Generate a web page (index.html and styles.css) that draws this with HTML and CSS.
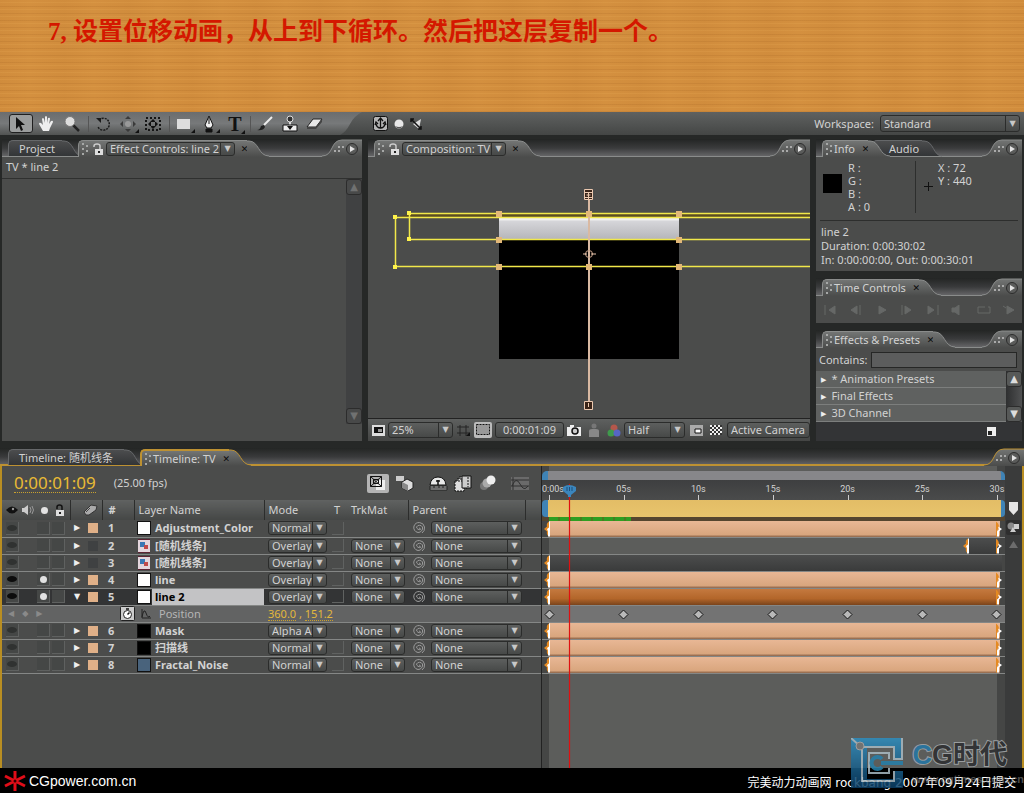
FILE: index.html
```
<!DOCTYPE html>
<html lang="zh">
	<head>
		<meta charset="utf-8">
		<meta name="viewport" content="width=device-width, initial-scale=1">
		<link rel="stylesheet" href="styles.css">
		<title>CGpower.com.cn</title>
	</head>
	<body>
		<!-- shared shapes -->
		<svg class="defs" width="0" height="0">
			<defs>
				<linearGradient id="tabfill" x1="0" y1="0" x2="0" y2="1"><stop offset="0" stop-color="#737574"/><stop offset="1" stop-color="#4b4c4b"/></linearGradient>
				<linearGradient id="toolfill" x1="0" y1="0" x2="0" y2="1"><stop offset="0" stop-color="#6b6d6e"/><stop offset=".5" stop-color="#77797a"/><stop offset="1" stop-color="#515352"/></linearGradient>
				<linearGradient id="offfill" x1="0" y1="0" x2="0" y2="1"><stop offset="0" stop-color="#4c4d4e"/><stop offset="1" stop-color="#333537"/></linearGradient>
				<linearGradient id="frame" x1="0" y1="0" x2="0" y2="1"><stop offset="0" stop-color="#e2e2e6"/><stop offset="1" stop-color="#b4b4b8"/></linearGradient>
				<linearGradient id="blue" x1="0" y1="0" x2="0" y2="1"><stop offset="0" stop-color="#2e8fc0"/><stop offset="1" stop-color="#0c3f66"/></linearGradient>
			</defs>
			<symbol id="slope" viewBox="0 0 22 17"><path d="M0 1H2C12 1 11 16 22 16V17H0Z" fill="url(#tabfill)"/><path class="edge" d="M0 1H2C12 1 11 16 22 16"/></symbol>
			<symbol id="slope-off" viewBox="0 0 22 17"><path d="M0 1H2C12 1 11 16 20 16H0Z" fill="url(#offfill)"/><path d="M0 1H2C12 1 11 16 20 16" fill="none" stroke="#66686a"/></symbol>
			<symbol id="corner" viewBox="0 0 40 18"><path d="M0 17C12 17 8 1 20 1H40V18H0Z" fill="url(#tabfill)"/><path class="edge" d="M0 17C12 17 8 1 20 1H40"/><path d="M12 11h2v2h-2zM16 11h2v2h-2zM16 7h2v2h-2zM20 7h2v2h-2z" fill="#aaa"/><circle cx="30" cy="10" r="5.500" fill="#5a5b5a" stroke="#2d2d2d"/><path d="M28 7l5 3-5 3z" fill="#e4e4e4"/></symbol>
			<symbol id="grip" viewBox="0 0 8 12"><path d="M0 0h2v2H0zM4 2h2v2H4zM0 5h2v2H0zM4 7h2v2H4zM0 10h2v2H0z" fill="#a6a8a7"/></symbol>
			<symbol id="lock" viewBox="0 0 10 12"><path d="M2 5V3q0-2 2.500-2T7 3v3" fill="none" stroke="#111" stroke-width="1.500"/><path d="M1 6h8v6H1z" fill="#ddd"/><path d="M4 8h2v2H4z" fill="#222"/></symbol>
			<symbol id="unlock" viewBox="0 0 10 12"><path d="M1 4V3q0-2 3-2t3 2v3" fill="none" stroke="#ccc" stroke-width="1.500"/><path d="M2 6h8v6H2z" fill="#ddd"/><path d="M5 8h2v2H5z" fill="#222"/></symbol>
			<symbol id="eye" viewBox="0 0 12 8"><path d="M0 4q6-7 12 0q-6 7-12 0z"/><circle cx="7" cy="3" r="1.200" fill="#999"/></symbol>
			<symbol id="spiral" viewBox="0 0 14 14"><path d="M7 7A1.500 1.500 0 0 1 8.500 8.500A3 3 0 0 1 4.500 6A3.500 3.500 0 0 1 10.500 6A4.500 4.500 0 0 1 6 11.500A5 5 0 0 1 2 5A5.500 5.500 0 0 1 12.500 6Q13 10 10 12" fill="none" stroke="#9a9a9a"/></symbol>
			<symbol id="inpt" viewBox="0 0 6 15"><path d="M5 0Q2 2 3 5L0 7.500 3 10Q2 13 5 15z" fill="#e58a22"/><path d="M3 7.500L4 10V15H6V0H5V6z" fill="#fff"/></symbol>
			<symbol id="outpt" viewBox="0 0 6 15"><path d="M0 0Q3 2 3 6L1 9V15H0z" fill="#e58a22"/><path d="M1 15V10L3 8 2 5 6 7.500 3 10V15z" fill="#fff"/></symbol>
			<symbol id="key" viewBox="0 0 11 11"><path d="M5.500 1L10 5.500 5.500 10 1 5.500z" fill="#b9b9b9" stroke="#151515"/></symbol>
			<symbol id="clip" viewBox="0 0 14 14"><path d="M1 0h12v14H1z" fill="#e4d6dd"/><path d="M1 0h12v1H1zM1 13h12v1H1z" fill="#5d2333"/><path d="M3 3h5v5H3z" fill="#3a78b5"/><path d="M7 6h4v4H7z" fill="#c04a4a"/></symbol>
		</svg>

		<header class="banner"><h1>7, 设置位移动画，从上到下循环。然后把这层复制一个。</h1></header>

		<nav class="toolbar">
			<div class="tools">
				<button class="tool on" aria-label="Selection"><svg width="20" height="18" viewBox="0 0 20 18"><path d="M6 2v12l3-3 2 5 2-1-2-5h4z" fill="#111"/></svg></button>
				<button class="tool" aria-label="Hand"><svg width="18" height="18" viewBox="0 0 18 18"><path d="M5 16L1 9q0-2 2-1l2 2L4 4q1-2 2 0l1 4V2q1-2 2 0v6l1-5q2-1 2 1l-1 5 2-3q2-1 2 1l-3 6-1 3z" fill="#eee"/></svg></button>
				<button class="tool" aria-label="Zoom"><svg width="18" height="18" viewBox="0 0 18 18"><path d="M10 10l6 6" stroke="#222" stroke-width="2.500"/><circle cx="7" cy="6.500" r="5" fill="#ddd" stroke="#777"/></svg></button>
				<i class="sep"></i>
				<button class="tool" aria-label="Rotate"><svg width="18" height="18" viewBox="0 0 18 18"><path d="M5 5a6 6 0 1 1-1 7" fill="none" stroke="#1a1a1a" stroke-width="1.500" stroke-dasharray="2 1"/><path d="M2 3h5v5z" fill="#1a1a1a"/></svg></button>
				<button class="tool more" aria-label="Camera"><svg width="18" height="18" viewBox="0 0 18 18"><circle cx="9" cy="9" r="3" fill="#999"/><path d="M9 1l3 3H6zM9 17l3-3H6zM1 9l3-3v6zM17 9l-3-3v6z" fill="#3a3a3a"/></svg></button>
				<button class="tool" aria-label="Pan behind"><svg width="18" height="18" viewBox="0 0 18 18"><path d="M2 3h14v12H2z" fill="none" stroke="#151515" stroke-width="2" stroke-dasharray="2 2"/><path d="M9 4l3 3H6zM9 14l3-3H6zM4 9l3-3v6zM14 9l-3-3v6z" fill="#111"/></svg></button>
				<i class="sep"></i>
				<button class="tool more" aria-label="Rectangle mask"><svg width="18" height="18" viewBox="0 0 18 18"><path d="M2 4h13v10H2z" fill="#ddd"/></svg></button>
				<button class="tool more" aria-label="Pen"><svg width="18" height="18" viewBox="0 0 18 18"><path d="M9 1l4 9-2 3H7l-2-3z" fill="#eee" stroke="#111"/><path d="M9 3v6M6 14h6v3H6z" fill="#111" stroke="#111"/></svg></button>
				<button class="tool more letter" aria-label="Type">T</button>
				<i class="sep"></i>
				<button class="tool" aria-label="Brush"><svg width="18" height="18" viewBox="0 0 18 18"><path d="M8 10L16 2" stroke="#eee" stroke-width="2"/><path d="M1 15q3 0 4-4l3-1 1 2q-2 4-8 3z" fill="#222"/></svg></button>
				<button class="tool" aria-label="Clone stamp"><svg width="18" height="18" viewBox="0 0 18 18"><circle cx="9" cy="4" r="3" fill="#333" stroke="#ddd"/><path d="M8 7h2v3H8z" fill="#ddd"/><path d="M2 10h14v6H2z" fill="#eee" stroke="#111"/><path d="M6 11h6l-3 4z" fill="#111"/></svg></button>
				<button class="tool" aria-label="Eraser"><svg width="18" height="18" viewBox="0 0 18 18"><path d="M7 4h9l-6 8H1z" fill="#e8e8e8" stroke="#222"/><path d="M1 12h9v2H1zM10 12l6-8v3l-6 7z" fill="#444"/></svg></button>
			</div>
			<svg class="cut" width="22" height="23" viewBox="0 0 22 23"><path d="M0 0H22Q14 4 10 12T0 23Z"/></svg>
			<div class="axes">
				<svg width="15" height="15" viewBox="0 0 15 15"><rect x=".5" y=".5" width="14" height="14" rx="2" fill="#b5b5b5" stroke="#111"/><path d="M7.500 3v9M3 8q1 4 4.500 4T12 8M5 5l2.500-3L10 5M2 9l1-3 2 2M13 9l-1-3-2 2" fill="none" stroke="#111" stroke-width="1.300"/></svg>
				<svg width="10" height="10" viewBox="0 0 10 10"><circle cx="5" cy="5" r="4.500" fill="#e8e8e8"/><path d="M1 7a4.500 4.500 0 0 0 8 0q-4 2-8 0z" fill="#555"/></svg>
				<svg width="12" height="12" viewBox="0 0 12 12"><path d="M11 1L3 6l6 5z" fill="#ddd"/><path d="M1 1l10 10M1 4V1h3M8 11h3V8" fill="none" stroke="#111" stroke-width="1.500"/></svg>
			</div>
			<label for="workspace">Workspace:</label>
			<span class="dd ws"><select id="workspace"><option>Standard</option></select></span>
		</nav>

		<main class="panels">
			<section class="panel">
				<div class="strip">
					<button class="tab off project">Project</button><svg class="slope" width="22" height="17"><use href="#slope-off"/></svg>
					<div class="tab push"><svg width="8" height="12"><use href="#grip"/></svg><svg width="10" height="12"><use href="#unlock"/></svg><span class="dd fx"><select aria-label="Effect Controls"><option>Effect Controls: line 2</option></select></span><button class="close" aria-label="Close">✕</button></div><svg class="slope" width="22" height="17"><use href="#slope"/></svg>
					<svg class="corner" width="40" height="18"><use href="#corner"/></svg>
				</div>
				<p class="crumb">TV * line 2</p>
				<div class="scrollarea"><div class="bar dim"><button aria-label="Up">▲</button><button aria-label="Down">▼</button></div></div>
			</section>

			<section class="panel">
				<div class="strip">
					<div class="tab"><svg width="8" height="12"><use href="#grip"/></svg><svg width="10" height="12"><use href="#unlock"/></svg><span class="dd comp"><select aria-label="Composition"><option>Composition: TV</option></select></span><button class="close" aria-label="Close">✕</button></div><svg class="slope" width="22" height="17"><use href="#slope"/></svg>
					<svg class="corner" width="40" height="18"><use href="#corner"/></svg>
				</div>
				<svg class="viewer" viewBox="368 157 442 261" preserveAspectRatio="xMidYMid slice">
					<path d="M499 214h180v145H499z"/>
					<path d="M499 214h180v26H499z" fill="url(#frame)"/>
					<path d="M409 214h420v4H395z" fill="#5a4c22"/>
					<path d="M499 219h180" stroke="#eee" stroke-width="3"/>
					<g fill="none" stroke="#f1e84a">
						<path d="M830 213.500H409.500V239.500H830" stroke-width="1.500"/>
						<path d="M830 217.500H395.500V266.500H830" stroke-width="1.500"/>
					</g>
					<path d="M407 211h4v4h-4zM407 237h4v4h-4zM393 215h4v4h-4zM393 265h4v4h-4z" fill="#fff34a"/>
					<path d="M589 196v210" stroke="#d9b9a2" stroke-width="2"/>
					<path d="M496 211h6v6h-6zM496 237h6v6h-6zM496 264h6v6h-6zM586 211h6v6h-6zM586 264h6v6h-6zM676 211h6v6h-6zM676 237h6v6h-6zM676 264h6v6h-6z" fill="#e3b878"/>
					<path d="M584.500 189.500h8v10h-8zM584.500 192.500h8M584.500 197.500h8M586.500 195h4M584.500 401.500h8v8h-8z" fill="#3a2418" stroke="#ecc9b0"/>
					<circle cx="589" cy="254" r="3.500" fill="none" stroke="#c9a48c"/><path d="M583 254h4M591 254h5M588.500 403v4M588.500 192v7" stroke="#ecc9b0"/>
				</svg>
				<div class="compbar">
					<svg width="13" height="11" viewBox="0 0 13 11"><path d="M0 0h13v11H0z" fill="#ddd"/><path d="M2 2h9v6H2z" fill="#111"/><path d="M6 4h4v3H6z" fill="#999"/></svg>
					<span class="dd zoom"><select aria-label="Magnification"><option>25%</option></select></span>
					<svg width="15" height="13" viewBox="0 0 15 13"><path d="M1 3h12M1 9h12M4 1v11M10 1v11" stroke="#252525" fill="none"/><path d="M10 12h4V8z" fill="#111"/></svg>
					<svg width="18" height="16" viewBox="0 0 18 16"><rect width="18" height="16" rx="2" fill="#bbb"/><path d="M2.500 2.500h13v10h-13z" fill="#999" stroke="#111" stroke-dasharray="2 1"/></svg>
					<button class="now">0:00:01:09</button>
					<svg width="14" height="11" viewBox="0 0 14 11"><path d="M0 2h3V0h4v2h7v9H0z" fill="#eee"/><circle cx="8" cy="6" r="3" fill="#ccc" stroke="#111" stroke-width="1.500"/></svg>
					<svg class="man" width="12" height="14" viewBox="0 0 12 14"><circle cx="6" cy="3" r="2.500" fill="#777"/><path d="M1 14V8q0-2 3-2h4q3 0 3 2v6z" fill="#888"/></svg>
					<svg width="14" height="13" viewBox="0 0 14 13"><circle cx="7" cy="4" r="3.500" fill="#b4574b"/><circle cx="4" cy="9" r="3.500" fill="#3f9a4c"/><circle cx="10" cy="9" r="3.500" fill="#5666c4"/></svg>
					<span class="dd res"><select aria-label="Resolution"><option>Half</option></select></span>
					<svg class="view" width="13" height="11" viewBox="0 0 13 11"><path d="M0 0h13v11H0z" fill="#aaa"/><path d="M5 4h6v4H5z" fill="#fff" stroke="#111"/></svg>
					<svg class="view" width="12" height="10" viewBox="0 0 12 10"><path d="M0 0h12v10H0z" fill="#eee"/><path d="M2 0h2v2H2zM6 0h2v2H6zM10 0h2v2h-2zM0 2h2v2H0zM4 2h2v2H4zM8 2h2v2H8zM2 4h2v2H2zM6 4h2v2H6zM10 4h2v2h-2zM0 6h2v2H0zM4 6h2v2H4zM8 6h2v2H8zM2 8h2v2H2zM6 8h2v2H6zM10 8h2v2h-2z" fill="#333"/></svg>
					<button class="cam">Active Camera</button>
				</div>
			</section>

			<div class="side">
				<section class="panel">
					<div class="strip">
						<div class="tab slim"><svg width="8" height="12"><use href="#grip"/></svg>Info<button class="close" aria-label="Close">✕</button></div><svg class="slope front" width="22" height="17"><use href="#slope"/></svg>
						<button class="tab off audio">Audio</button><svg class="slope" width="22" height="17"><use href="#slope-off"/></svg>
						<svg class="corner" width="40" height="18"><use href="#corner"/></svg>
					</div>
					<div class="info">
						<div class="readout">
							<i class="swatch"></i>
							<div class="rgb"><p>R :</p><p>G :</p><p>B :</p><p>A : 0</p></div>
							<svg width="9" height="9" viewBox="0 0 9 9"><path d="M4.500 0v9M0 4.500h9" stroke="#111"/></svg>
							<div class="xy"><p>X : 72</p><p>Y : 440</p></div>
						</div>
						<div class="clipinfo"><p>line 2</p><p>Duration: 0:00:30:02</p><p>In: 0:00:00:00, Out: 0:00:30:01</p></div>
					</div>
				</section>
				<section class="panel">
					<div class="strip">
						<div class="tab slim"><svg width="8" height="12"><use href="#grip"/></svg>Time Controls<button class="close" aria-label="Close">✕</button></div><svg class="slope" width="22" height="17"><use href="#slope"/></svg>
						<svg class="corner" width="40" height="18"><use href="#corner"/></svg>
					</div>
					<div class="transport">
						<svg viewBox="0 0 14 10"><path d="M1 0v10"/><path class="fill" d="M11 1L5 5l6 4z"/></svg>
						<svg viewBox="0 0 14 10"><path class="fill" d="M8 1L2 5l6 4z"/><path d="M11 0v10"/></svg>
						<svg viewBox="0 0 14 10"><path class="fill" d="M4 1l7 4-7 4z"/></svg>
						<svg viewBox="0 0 14 10"><path d="M2 0v10"/><path class="fill" d="M5 1l6 4-6 4z"/></svg>
						<svg viewBox="0 0 14 10"><path class="fill" d="M2 1l6 4-6 4z"/><path d="M12 0v10"/></svg>
						<svg viewBox="0 0 14 10"><path class="fill" d="M1 3h3l4-3v10L4 7H1z"/></svg>
						<svg viewBox="0 0 14 10"><path d="M1 2h7M11 2h2v6H1V2"/></svg>
						<svg viewBox="0 0 14 10"><path class="fill" d="M5 1l7 4-7 4z"/><path d="M1 1l3 2"/></svg>
					</div>
				</section>
				<section class="panel effects">
					<div class="strip">
						<div class="tab slim"><svg width="8" height="12"><use href="#grip"/></svg>Effects &amp; Presets<button class="close" aria-label="Close">✕</button></div><svg class="slope" width="22" height="17"><use href="#slope"/></svg>
						<svg class="corner" width="40" height="18"><use href="#corner"/></svg>
					</div>
					<div class="find"><label for="contains">Contains:</label><input id="contains" type="text"></div>
					<div class="presets">
						<ul><li>* Animation Presets</li><li>Final Effects</li><li>3D Channel</li></ul>
						<div class="bar"><button aria-label="Up">▲</button><button aria-label="Down">▼</button></div>
					</div>
					<div class="presetfoot"><svg width="9" height="9" viewBox="0 0 9 9"><path d="M0 0h9v9H0z" fill="#eee"/><path d="M1 4h4v4H1z" fill="#222"/></svg></div>
				</section>
			</div>
		</main>

		<section class="timeline">
			<div class="strip">
				<button class="tab off comp2">Timeline: 随机线条</button><svg class="slope" width="22" height="17"><use href="#slope-off"/></svg>
				<div class="tab slim push"><svg width="8" height="12"><use href="#grip"/></svg>Timeline: TV<button class="close" aria-label="Close">✕</button></div><svg class="slope" width="22" height="17"><use href="#slope"/></svg>
				<svg class="corner" width="40" height="18"><use href="#corner"/></svg>
			</div>
			<div class="tlbody">
				<div class="layers">
					<div class="clock">
						<button class="time">0:00:01:09</button><span>(25.00 fps)</span>
						<div class="switches">
							<svg width="22" height="19" viewBox="0 0 22 19"><rect width="22" height="19" rx="2" fill="#b4b4b4"/><path d="M9 6h9v10H9z" fill="#eee"/><path d="M3.500 2.500h11v10h-11zM3.500 2.500l11 10M14.500 2.500l-11 10M6.500 5.500h5v4h-5z" fill="none" stroke="#111"/></svg>
							<svg width="20" height="16" viewBox="0 0 20 16"><path d="M1 1h8v5H1z" fill="#ccc"/><path d="M7 7l5-3 6 3v6l-5 3-6-3z" fill="#ddd" stroke="#222"/><path d="M7 7l6 3v6l-6-3z" fill="#888"/></svg>
							<svg class="gap" width="19" height="16" viewBox="0 0 19 16"><path d="M1 10q1-8 8-8t8 8z" fill="#e8e8e8" stroke="#111"/><path d="M9 5v5M7 6h4" stroke="#111" stroke-width="1.500"/><path d="M1 11h17v4H1z" fill="#bbb" stroke="#222"/><path d="M5 11v2M10 11v2M14 11v2M1 13h17" stroke="#222"/></svg>
							<svg width="19" height="17" viewBox="0 0 19 17"><path d="M1 6h9v10H1zM3 4h9v10M5 2h9v10" fill="#ddd" stroke="#111" stroke-dasharray="2 1"/><path d="M8 1h9v12H8z" fill="#ccc" stroke="#111"/><path d="M14 2v10" stroke="#111" stroke-dasharray="2 1"/></svg>
							<svg width="18" height="16" viewBox="0 0 18 16"><circle cx="5" cy="11" r="4" fill="#777"/><circle cx="8" cy="8" r="4.500" fill="#aaa"/><circle cx="12" cy="5" r="4.500" fill="#eee"/></svg>
							<svg class="gap" width="18" height="13" viewBox="0 0 18 13"><path d="M0 0h18v13H0z" fill="#6a6a6a"/><path d="M0 3h18M0 9h18M2 0v13M1 9q4-10 8-2t8 2" fill="none" stroke="#303030"/></svg>
						</div>
					</div>
					<table>
						<colgroup><col class="c-av"><col class="c-label"><col class="c-num"><col class="c-name"><col class="c-mode"><col class="c-t"><col class="c-trk"><col class="c-parent"><col></colgroup>
						<thead><tr>
							<th class="rule"><div class="heads"><svg width="12" height="8" fill="#111"><use href="#eye"/></svg><svg width="12" height="10" viewBox="0 0 12 10"><path d="M0 3h2l4-3v10L2 7H0z" fill="#ccc"/><path d="M8 2q2 3 0 6M10 1q3 4 0 8" fill="none" stroke="#999"/></svg><i class="dot"></i><svg width="10" height="12"><use href="#lock"/></svg></div></th>
							<th class="rule"><svg class="tag" width="15" height="12" viewBox="0 0 15 12"><path d="M1 8l7-7 6 1-1 4-7 5H3z" fill="#aaa" stroke="#333"/><path d="M3 8l4-4" stroke="#444"/></svg></th>
							<th class="rule num">#</th><th class="rule">Layer Name</th><th>Mode</th><th>T</th><th class="rule">TrkMat</th><th class="rule">Parent</th><th></th>
						</tr></thead>
						<tbody>
							<tr><td><div class="av"><i class="eye"></i><i></i><i></i></div></td><td><div class="lab"><b>▶</b><i></i></div></td><td class="num">1</td><td><div class="name"><i class="white"></i>Adjustment_Color</div></td><td><span class="dd"><select aria-label="Mode 1"><option>Normal</option></select></span></td><td><i class="tbox"></i></td><td></td><td><div class="par"><svg width="14" height="14"><use href="#spiral"/></svg><span class="dd"><select aria-label="Parent 1"><option>None</option></select></span></div></td><td></td></tr>
							<tr><td><div class="av"><i class="eye"></i><i></i><i></i></div></td><td><div class="lab"><b>▶</b><i class="dark"></i></div></td><td class="num">2</td><td><div class="name"><svg width="14" height="14"><use href="#clip"/></svg>[随机线条]</div></td><td><span class="dd"><select aria-label="Mode 2"><option>Overlay</option></select></span></td><td><i class="tbox"></i></td><td><span class="dd"><select aria-label="TrkMat 2"><option>None</option></select></span></td><td><div class="par"><svg width="14" height="14"><use href="#spiral"/></svg><span class="dd"><select aria-label="Parent 2"><option>None</option></select></span></div></td><td></td></tr>
							<tr><td><div class="av"><i class="eye"></i><i></i><i></i></div></td><td><div class="lab"><b>▶</b><i class="dark"></i></div></td><td class="num">3</td><td><div class="name"><svg width="14" height="14"><use href="#clip"/></svg>[随机线条]</div></td><td><span class="dd"><select aria-label="Mode 3"><option>Overlay</option></select></span></td><td><i class="tbox"></i></td><td><span class="dd"><select aria-label="TrkMat 3"><option>None</option></select></span></td><td><div class="par"><svg width="14" height="14"><use href="#spiral"/></svg><span class="dd"><select aria-label="Parent 3"><option>None</option></select></span></div></td><td></td></tr>
							<tr><td><div class="av"><i class="eye on"></i><i class="solo"></i><i></i></div></td><td><div class="lab"><b>▶</b><i></i></div></td><td class="num">4</td><td><div class="name"><i class="white"></i>line</div></td><td><span class="dd"><select aria-label="Mode 4"><option>Overlay</option></select></span></td><td><i class="tbox"></i></td><td><span class="dd"><select aria-label="TrkMat 4"><option>None</option></select></span></td><td><div class="par"><svg width="14" height="14"><use href="#spiral"/></svg><span class="dd"><select aria-label="Parent 4"><option>None</option></select></span></div></td><td></td></tr>
							<tr class="sel"><td><div class="av"><i class="eye on"></i><i class="solo"></i><i></i></div></td><td><div class="lab"><b>▼</b><i></i></div></td><td class="num">5</td><td><div class="name"><i class="white"></i><span>line 2</span></div></td><td><span class="dd"><select aria-label="Mode 5"><option>Overlay</option></select></span></td><td><i class="tbox"></i></td><td><span class="dd"><select aria-label="TrkMat 5"><option>None</option></select></span></td><td><div class="par"><svg width="14" height="14"><use href="#spiral"/></svg><span class="dd"><select aria-label="Parent 5"><option>None</option></select></span></div></td><td></td></tr>
							<tr class="prop"><td><div class="keynav"><span>◀</span><span>◆</span><span>▶</span></div></td><td></td><td><svg class="watch" width="15" height="15" viewBox="0 0 15 15"><rect x=".5" y=".5" width="14" height="14" rx="1" fill="#ccc" stroke="#222"/><circle cx="7.500" cy="8.500" r="4" fill="#fff" stroke="#222"/><path d="M7.500 8.500l2-2M6 3h3" stroke="#111" stroke-width="1.500"/></svg></td><td><div class="pname"><svg width="10" height="10" viewBox="0 0 10 10"><path d="M1 0v9h9M1 8q2-10 4-4t4 3" fill="none" stroke="#222"/></svg>Position</div></td><td colspan="5" class="value"><button>360.0</button> , <button>151.2</button></td></tr>
							<tr><td><div class="av"><i class="eye"></i><i></i><i></i></div></td><td><div class="lab"><b>▶</b><i></i></div></td><td class="num">6</td><td><div class="name"><i class="black"></i>Mask</div></td><td><span class="dd"><select aria-label="Mode 6"><option>Alpha Add</option></select></span></td><td></td><td><span class="dd"><select aria-label="TrkMat 6"><option>None</option></select></span></td><td><div class="par"><svg width="14" height="14"><use href="#spiral"/></svg><span class="dd"><select aria-label="Parent 6"><option>None</option></select></span></div></td><td></td></tr>
							<tr><td><div class="av"><i class="eye"></i><i></i><i></i></div></td><td><div class="lab"><b>▶</b><i></i></div></td><td class="num">7</td><td><div class="name"><i class="black"></i>扫描线</div></td><td><span class="dd"><select aria-label="Mode 7"><option>Normal</option></select></span></td><td><i class="tbox"></i></td><td><span class="dd"><select aria-label="TrkMat 7"><option>None</option></select></span></td><td><div class="par"><svg width="14" height="14"><use href="#spiral"/></svg><span class="dd"><select aria-label="Parent 7"><option>None</option></select></span></div></td><td></td></tr>
							<tr><td><div class="av"><i class="eye"></i><i></i><i></i></div></td><td><div class="lab"><b>▶</b><i></i></div></td><td class="num">8</td><td><div class="name"><i class="slate"></i>Fractal_Noise</div></td><td><span class="dd"><select aria-label="Mode 8"><option>Normal</option></select></span></td><td><i class="tbox"></i></td><td><span class="dd"><select aria-label="TrkMat 8"><option>None</option></select></span></td><td><div class="par"><svg width="14" height="14"><use href="#spiral"/></svg><span class="dd"><select aria-label="Parent 8"><option>None</option></select></span></div></td><td></td></tr>
						</tbody>
					</table>
				</div>
				<div class="tracks">
					<div class="navigator"></div>
					<div class="ruler"><span>0:00s</span><span>05s</span><span>10s</span><span>15s</span><span>20s</span><span>25s</span><span>30s</span></div>
					<div class="workarea"></div>
					<div class="cache"><i></i></div>
					<div class="lane"><svg><use href="#inpt"/></svg><div class="clipbar"></div><svg><use href="#outpt"/></svg></div>
					<div class="lane late"><svg><use href="#inpt"/></svg><div class="clipbar dark"></div><svg><use href="#outpt"/></svg></div>
					<div class="lane"><svg><use href="#inpt"/></svg><div class="clipbar dark"></div></div>
					<div class="lane"><svg><use href="#inpt"/></svg><div class="clipbar"></div><svg><use href="#outpt"/></svg></div>
					<div class="lane"><svg><use href="#inpt"/></svg><div class="clipbar hot"></div><svg><use href="#outpt"/></svg></div>
					<div class="lane keys"><i><svg><use href="#key"/></svg></i><i><svg><use href="#key"/></svg></i><i><svg><use href="#key"/></svg></i><i><svg><use href="#key"/></svg></i><i><svg><use href="#key"/></svg></i><i><svg><use href="#key"/></svg></i><i><svg><use href="#key"/></svg></i></div>
					<div class="lane"><svg><use href="#inpt"/></svg><div class="clipbar"></div><svg><use href="#outpt"/></svg></div>
					<div class="lane"><svg><use href="#inpt"/></svg><div class="clipbar"></div><svg><use href="#outpt"/></svg></div>
					<div class="lane"><svg><use href="#inpt"/></svg><div class="clipbar"></div><svg><use href="#outpt"/></svg></div>
					<div class="playhead"><svg width="13" height="13" viewBox="0 0 13 13"><path d="M0 3q6-4 13 0v4l-5 4v2H5v-2L0 7z" fill="#3b86bd"/><path d="M4 3v4M6.500 3v4M9 3v4" stroke="#1b4f7c"/></svg></div>
				</div>
				<div class="gutter">
					<svg width="11" height="13" viewBox="0 0 11 13"><path d="M1 0h9v8l-4.500 5L1 8z" fill="#e6e6e6"/></svg>
					<svg class="btn" width="15" height="15" viewBox="0 0 15 15"><rect width="15" height="15" rx="2" fill="#2e2e2e"/><circle cx="5" cy="6" r="3.500" fill="#888"/><path d="M8 4h5v5H8zM7 7l3 5H4z" fill="#ccc"/></svg>
					<svg width="11" height="10" viewBox="0 0 11 10"><path d="M5.500 1L10 8H1z" fill="#6c6c6c"/></svg>
				</div>
			</div>
		</section>

		<footer>
			<svg width="22" height="22" viewBox="0 0 22 22"><path d="M11 1v20M1 6l20 10M21 6L1 16" stroke="#e00d18" stroke-width="3"/><circle cx="11" cy="11" r="1.500" fill="#300"/></svg>
			<span class="site">CGpower.com.cn</span>
			<span class="credit">完美动力动画网 rockbang 2007年09月24日提交</span>
			<div class="watermark">
				<svg width="54" height="50" viewBox="0 0 54 50"><path d="M0 0h52v21h-9V9H16v32h27v-8h9v17H0z" fill="url(#blue)"/><path d="M0 0l11 10v33h32V33M12 9h31v12h9M51 0v20M38 21v-6H18v20h20v-5" fill="none" stroke="#a9bac3" stroke-width="2"/><circle cx="9" cy="8" r="4" fill="#777" stroke="#aaa"/><path d="M31 21a6 6 0 1 0 0 8M30 25h22" fill="none" stroke="#2580ab" stroke-width="4"/></svg>
				<div><p class="big"><b>C</b>G时代</p><p class="url">www.cgtimes.com.cn</p></div>
			</div>
		</footer>
	</body>
</html>
```
FILE: styles.css
```
*{
	box-sizing:border-box;
}
:root{
	--edge:#8a8c8b;
	--text:#d2d2d2;
}
body{
	margin:0;
	min-height:100vh;
	display:flex;
	flex-direction:column;
	background:#262827;
	color:var(--text);
	font:11px/14px "Noto Sans", "Noto Sans CJK SC", sans-serif;
}
p, h1, ul{
	margin:0;
	padding:0;
}
svg{
	display:block;
	flex:none;
}
.defs{
	position:absolute;
}
button{
	margin:0;
	padding:0;
	border:0;
	background:none;
	color:inherit;
	font:inherit;
	white-space:nowrap;
}
.edge{
	fill:none;
	stroke:var(--edge);
}
.banner{
	height:112px;
	padding:16px 48px;
	background:
		repeating-linear-gradient(0deg, rgba(120,60,10,.1) 0 1px, transparent 1px 4px, rgba(255,200,110,.1) 4px 5px, transparent 5px 7px),
		repeating-linear-gradient(90deg, rgba(150,80,20,.06) 0, transparent 30px, rgba(150,80,20,.06) 64px),
		#d4903f;
}
.banner h1{
	color:#d41800;
	font:bold 25px/32px "Liberation Serif", "Noto Sans CJK SC", serif;
}

/* drop-downs */
.dd{
	position:relative;
	display:block;
	flex:none;
	height:14px;
}
.dd select{
	appearance:none;
	display:block;
	width:100%;
	height:100%;
	margin:0;
	padding:0 14px 0 3px;
	border:1px solid #2b2c2b;
	border-radius:3px;
	background:linear-gradient(#5d5f5e, #474948);
	color:var(--text);
	font:inherit;
	line-height:12px;
}
.dd::after{
	content:"▼";
	position:absolute;
	top:1px;
	right:1px;
	bottom:1px;
	width:13px;
	border-left:1px solid #2b2c2b;
	color:#c8c8c8;
	font:8px/12px "DejaVu Sans", sans-serif;
	text-align:center;
	pointer-events:none;
}

/* toolbar */
.toolbar{
	display:flex;
	align-items:center;
	height:23px;
	padding-right:4px;
	background:linear-gradient(#5f6160, #525453 50%, #444645);
}
.tools{
	display:flex;
	align-items:center;
	align-self:stretch;
	width:340px;
	padding-left:9px;
	gap:5px;
	background:linear-gradient(#6b6d6e, #77797a 50%, #515352);
}
.cut path{
	fill:url(#toolfill);
}
.tool{
	position:relative;
	flex:none;
	width:20px;
}
.tool.on{
	width:24px;
	height:19px;
	border:1px solid #1f1f1f;
	border-radius:3px;
	background:#9b9d9d;
}
.more::after{
	content:"";
	position:absolute;
	right:0;
	bottom:0;
	border:2px solid #111;
	border-top-color:transparent;
	border-left-color:transparent;
}
.letter{
	color:#111;
	font:bold 20px/20px "Liberation Serif", serif;
}
.sep{
	width:1px;
	height:16px;
	background:#555;
}
.axes{
	display:flex;
	align-items:center;
	gap:6px;
	margin:0 auto 0 11px;
}
.dd.ws{
	width:140px;
	height:17px;
	margin-left:6px;
}
.ws::after{
	line-height:15px;
}

/* panels */
.panels{
	display:grid;
	grid-template-columns:360fr 442fr 206px;
	gap:6px;
	padding:4px 2px 0;
}
.panel{
	display:flex;
	flex-direction:column;
	min-width:0;
	background:#4b4c4b;
}
.strip{
	display:flex;
	align-items:flex-end;
	height:18px;
	padding-left:6px;
	background:linear-gradient(#232524, #3a3b3c 50%, #6a6a6c);
	box-shadow:inset 0 -1px var(--edge);
}
.tab{
	display:flex;
	align-items:center;
	flex:none;
	gap:3px;
	height:17px;
	padding-left:3px;
	border:1px solid var(--edge);
	border-width:1px 0 0 1px;
	border-radius:5px 0 0 0;
	background:linear-gradient(#737574, #4b4c4b);
}
.tab.slim{
	gap:0;
}
.tab.off{
	height:16px;
	margin-bottom:1px;
	border-color:#66686a;
	background:linear-gradient(#4c4d4e, #333537);
}
.project{
	width:54px;
	padding-left:10px;
}
.push{
	margin-left:-6px;
}
.audio{
	width:50px;
	margin-left:-18px;
	padding-left:16px;
}
.front{
	z-index:1;
}
.comp2{
	width:116px;
	padding-left:10px;
}
.corner{
	margin-left:auto;
}
.close{
	width:13px;
	margin-right:-4px;
	color:#0c0c0c;
	font:bold 9px/12px "DejaVu Sans", sans-serif;
}
.tab.slim .close{
	margin-left:4px;
}
.dd.fx{
	width:129px;
}
.dd.comp{
	width:104px;
}
.crumb{
	padding:3px 4px 4px;
	border-bottom:1px solid #2f302f;
}
.scrollarea{
	flex:1;
	display:flex;
	justify-content:flex-end;
	padding-bottom:17px;
}
.bar{
	display:flex;
	flex-direction:column;
	justify-content:space-between;
	width:16px;
	background:linear-gradient(90deg, #2e2f30, #505152);
}
.bar button{
	height:16px;
	border:1px solid #2c2c2c;
	border-radius:3px;
	background:#575958;
	color:#ddd;
	font:10px/12px "DejaVu Sans", sans-serif;
}
.bar.dim{
	background:#404142;
}
.bar.dim button{
	background:#484949;
	color:#707171;
}
.viewer{
	width:100%;
	height:261px;
}
.compbar{
	display:flex;
	align-items:center;
	gap:3px;
	height:23px;
	padding-left:4px;
	overflow:hidden;
	border-top:1px solid #222;
	background:linear-gradient(#5e605f, #444544);
}
.compbar .dd{
	height:16px;
}
.compbar .dd::after{
	line-height:14px;
}
.dd.zoom{
	width:65px;
}
.dd.res{
	width:61px;
}
.compbar button{
	height:16px;
	border:1px solid #2b2c2b;
	border-radius:3px;
	background:linear-gradient(#5d5f5e, #474948);
	line-height:14px;
}
.now{
	flex:none;
	width:69px;
}
.man{
	margin:0 4px;
}
.view{
	margin:0 2px;
}
.cam{
	flex:1;
	min-width:80px;
	padding-left:3px;
	text-align:left;
}
.side{
	display:flex;
	flex-direction:column;
	gap:7px;
}
.info{
	height:114px;
	padding:4px 4px 0;
}
.readout{
	display:flex;
	align-items:center;
	height:60px;
	border-bottom:1px solid #2d2e2d;
}
.rgb, .xy{
	align-self:flex-start;
	padding:0 6px;
	line-height:13px;
}
.rgb{
	width:74px;
	height:52px;
	margin-right:8px;
	border-right:1px solid #2d2e2d;
}
.swatch{
	width:19px;
	height:19px;
	margin:0 0 14px 3px;
	background:#000;
}
.readout svg{
	margin-bottom:8px;
}
.xy{
	padding:0 5px;
}
.clipinfo{
	padding:4px 1px;
}
.transport{
	display:flex;
	justify-content:space-between;
	align-items:center;
	height:27px;
	padding:0 6px 0 8px;
}
.transport svg{
	width:14px;
	height:10px;
	fill:none;
	stroke:#666867;
}
.transport .fill{
	fill:#666867;
}
.effects{
	flex:1;
}
.find{
	display:flex;
	align-items:center;
	gap:4px;
	height:23px;
	padding:0 5px 0 3px;
}
.find input{
	flex:1;
	min-width:0;
	height:16px;
	border:1px solid #262726;
	background:#5c5d5d;
	color:var(--text);
	font:inherit;
}
.presets{
	display:flex;
}
.presets ul{
	flex:1;
	list-style:none;
}
.presets li{
	height:17px;
	padding-left:5px;
	border-bottom:1px solid #7c7e7d;
	background:#5f6160;
	line-height:16px;
}
.presets li::before{
	content:"▶";
	margin-right:5px;
	color:#eee;
	font:7px/10px "DejaVu Sans", sans-serif;
	vertical-align:1px;
}
.presetfoot{
	flex:1;
	display:flex;
	justify-content:flex-end;
	align-items:center;
	padding-right:26px;
	background:#333436;
}

/* timeline */
.timeline{
	--edge:#bd9132;
	flex:1;
	display:flex;
	flex-direction:column;
	margin-top:7px;
	border:solid #b98e22;
	border-width:0 2px;
	background:#4b4c4b;
}
.timeline .edge{
	stroke-width:2;
}
.timeline .strip{
	margin:0 -2px;
	padding-left:8px;
	box-shadow:inset 0 -2px var(--edge);
}
.timeline .tab.slim{
	border-width:2px 0 0 2px;
}
.tlbody{
	flex:1;
	display:flex;
}
.layers{
	flex:none;
	width:540px;
	border-right:1px solid #222;
}
.clock{
	display:flex;
	align-items:center;
	height:34px;
	padding-left:12px;
	gap:18px;
}
.time{
	border-bottom:1px dotted #caa12e;
	color:#e9bb35;
	font-size:17px;
	line-height:18px;
}
.switches{
	display:flex;
	align-items:center;
	gap:6px;
	margin:0 12px 0 auto;
}
.switches .gap{
	margin-left:8px;
}
table{
	width:100%;
	table-layout:fixed;
	border-collapse:collapse;
}
.c-av{
	width:68px;
}
.c-label, .c-num{
	width:32px;
}
.c-name{
	width:130px;
}
.c-mode{
	width:66px;
}
.c-t{
	width:17px;
}
.c-trk{
	width:61px;
}
.c-parent{
	width:117px;
}
th{
	height:20px;
	padding:0 4px;
	background:linear-gradient(#606261, #454746);
	font-weight:normal;
	text-align:left;
}
th.rule{
	border-right:1px solid #2c2d2c;
}
.heads{
	display:flex;
	align-items:center;
	gap:4px;
}
.tag{
	margin-left:8px;
}
.dot, .solo::before{
	width:7px;
	height:7px;
	border-radius:50%;
	background:#e2e2e2;
}
.dot{
	margin:0 3px;
}
td{
	height:17px;
	padding:0 3px 0 4px;
	border-bottom:1px solid #858786;
	line-height:14px;
}
.num{
	padding-left:6px;
	font-weight:bold;
}
.av{
	display:flex;
	gap:2px;
}
.av i{
	display:flex;
	align-items:center;
	justify-content:center;
	width:13px;
	height:13px;
	border:1px solid #5f6160;
	border-width:0 1px 1px 0;
	background:#454746;
}
.av .eye{
	margin-right:16px;
}
.eye::before{
	content:"";
	width:10px;
	height:6px;
	border-radius:50%;
	background:#303231;
}
.eye.on::before{
	background:#0c0c0c;
}
.solo::before{
	content:"";
}
.lab{
	display:flex;
	align-items:center;
	gap:4px;
}
.lab b{
	width:10px;
	color:#eee;
	font:8px/12px "DejaVu Sans", sans-serif;
}
.lab i{
	width:10px;
	height:10px;
	background:#e0b088;
}
.lab .dark{
	background:#3f4142;
}
.name{
	display:flex;
	align-items:center;
	gap:4px;
	margin-right:-3px;
	margin-left:-1px;
	font-weight:bold;
	white-space:nowrap;
}
.name i{
	width:14px;
	height:14px;
	border:1px solid #111;
}
.white{
	background:#fff;
}
.black{
	background:#000;
}
.slate{
	background:#49637c;
}
.sel{
	background:#333435;
}
.sel span:not(.dd){
	flex:1;
	height:16px;
	margin-left:-3px;
	padding-left:3px;
	background:#c3c3c5;
	color:#000;
	line-height:16px;
}
.tbox{
	display:block;
	width:12px;
	height:13px;
	margin-left:-2px;
	border:solid #606261;
	border-width:0 1px 1px 0;
}
.par{
	display:flex;
	align-items:center;
	gap:5px;
}
.par .dd{
	flex:1;
}
.prop{
	background:#626363;
}
.keynav{
	display:flex;
	gap:8px;
	padding-left:2px;
	color:#8a8a8a;
	font:8px/12px "DejaVu Sans", sans-serif;
}
.watch{
	margin-left:14px;
}
.pname{
	display:flex;
	gap:8px;
	align-items:center;
	padding-left:3px;
	color:#b5b5b5;
}
.value{
	color:#e3b83c;
}
.value button{
	border-bottom:1px dotted #caa12e;
	line-height:12px;
}
.tracks{
	position:relative;
	flex:1;
	min-width:0;
	padding-top:5px;
	background:linear-gradient(90deg, #454645 7px, #5c5d5b 7px calc(100% - 8px), #454645 0);
}
.navigator, .workarea{
	border:solid #3f83b5;
	border-width:0 4px 0 6px;
}
.navigator{
	height:9px;
	border-radius:5px 5px 0 0;
	background:#87878a;
}
.ruler{
	display:flex;
	justify-content:space-between;
	height:20px;
	padding:0 8px 0 7px;
	background:linear-gradient(#3e3f40, #4a4b4b);
}
.ruler span{
	position:relative;
	display:flex;
	justify-content:center;
	width:0;
	font:9px/18px Roboto, sans-serif;
}
.ruler span:first-child{
	justify-content:flex-start;
	text-indent:-7px;
}
.ruler span::after{
	content:"";
	position:absolute;
	left:0;
	bottom:0;
	width:1px;
	height:5px;
	background:#ccc;
}
.workarea{
	height:17px;
	border-radius:4px;
	background:linear-gradient(#e3bd66, #e8c46c);
}
.cache{
	height:4px;
	padding-left:7px;
	background:#55452f;
}
.cache i{
	display:block;
	width:18%;
	height:4px;
	background:repeating-linear-gradient(90deg, #2f9e22 0 9px, #4b7a22 9px 11px);
}
.lane{
	display:flex;
	height:17px;
	padding:0 3px 0 2px;
	border-bottom:1px solid #858786;
}
.lane svg{
	width:6px;
	height:16px;
	z-index:1;
}
.lane > svg:last-child{
	margin-left:-4px;
}
.clipbar{
	flex:1;
	margin-left:-1px;
	background:linear-gradient(#e8b795, #d9a67e 85%, #8a6247);
}
.clipbar.hot{
	background:linear-gradient(#c4793f, #b3662a 60%, #7a441c);
}
.clipbar.dark{
	background:linear-gradient(#4c4d4d, #3a3b3b);
}
.late{
	padding-left:91%;
}
.lane.keys{
	justify-content:space-between;
	align-items:center;
	padding:0 8px 0 7px;
	background:#737373;
}
.keys i{
	display:flex;
	justify-content:center;
	width:0;
}
.keys i svg{
	width:11px;
	height:11px;
}
.playhead{
	position:absolute;
	z-index:2;
	top:18px;
	bottom:0;
	left:27px;
	width:1px;
	background:#e01010;
	box-shadow:0 0 1px #e01010;
}
.playhead svg{
	margin-left:-6px;
}
.gutter{
	display:flex;
	flex-direction:column;
	align-items:center;
	gap:5px;
	flex:none;
	width:17px;
	padding-top:36px;
	background:#3a3b3b;
}

/* footer */
footer{
	position:relative;
	display:flex;
	align-items:center;
	height:25px;
	padding:0 8px 0 4px;
	background:#000;
	color:#fff;
}
.site{
	margin-left:3px;
	font:14px/18px "Liberation Sans", sans-serif;
}
.credit{
	margin:4px 0 0 auto;
	font:12px/18px "DejaVu Sans", "Noto Sans CJK SC", sans-serif;
}
.watermark{
	position:absolute;
	right:0;
	bottom:5px;
	display:flex;
	gap:8px;
	opacity:.85;
}
.big{
	color:#2c2e30;
	font:bold 27px/34px "Liberation Sans", "Noto Sans CJK SC", sans-serif;
	-webkit-text-stroke:2px #a5a9ab;
	paint-order:stroke fill;
}
.big b{
	color:#2378a8;
}
.url{
	color:#999;
	font:bold 11px/14px "Liberation Sans", sans-serif;
	opacity:.6;
}
```
